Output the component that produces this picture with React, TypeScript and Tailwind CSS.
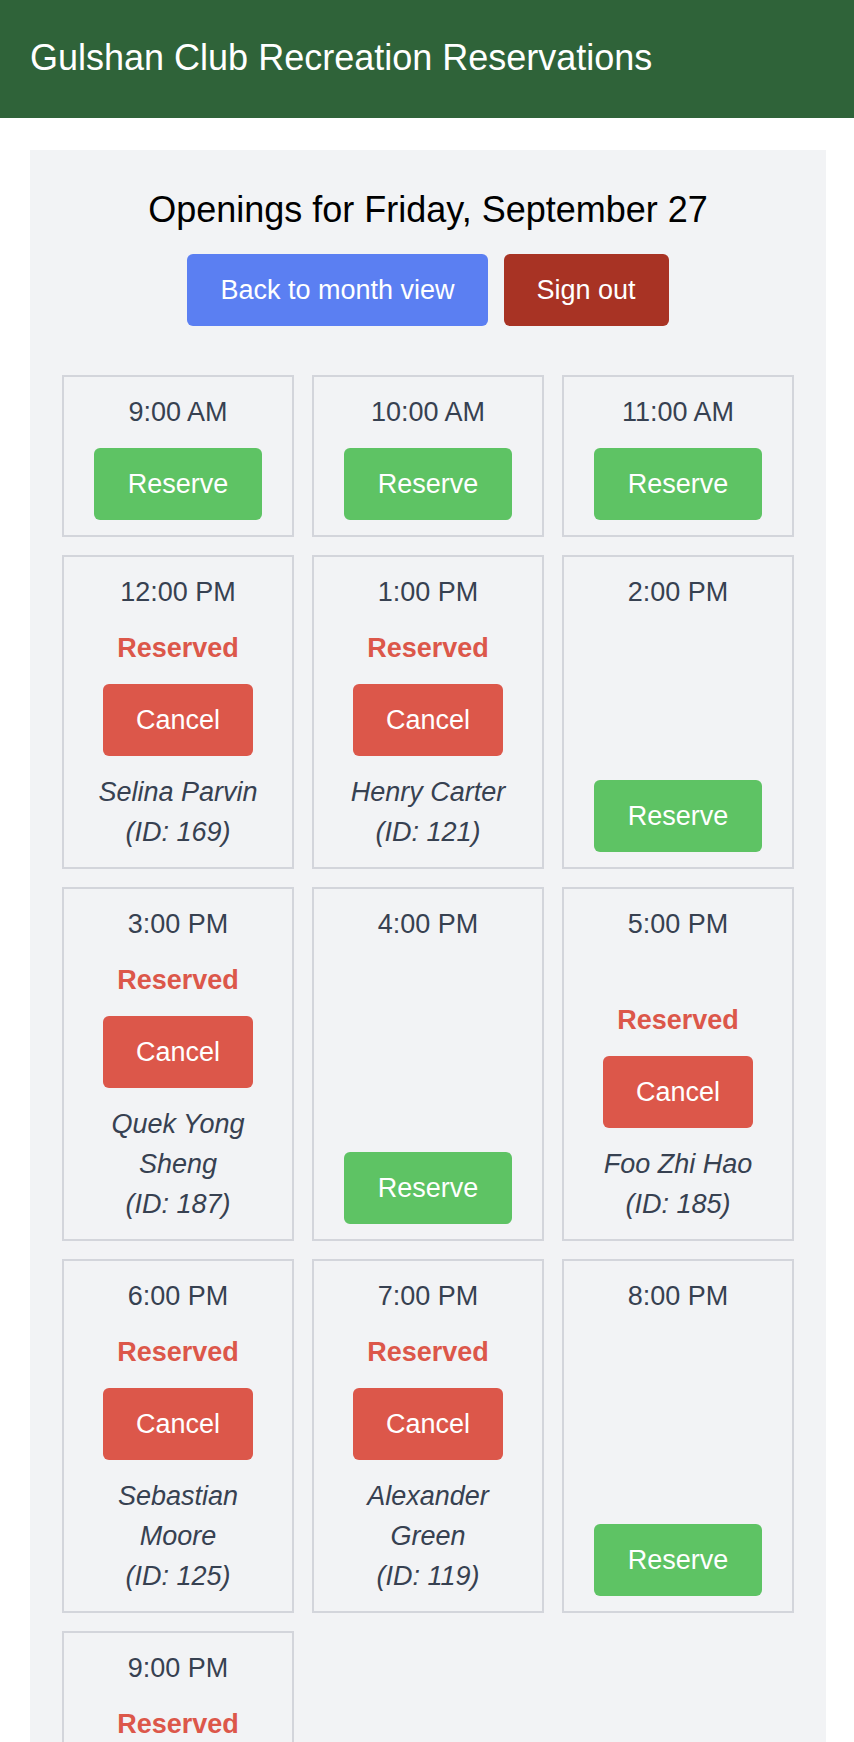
import React from 'react';

type Slot = {
    time: string;
    name?: string;
    id?: number;
};

const slots: Slot[] = [
    { time: '9:00 AM' },
    { time: '10:00 AM' },
    { time: '11:00 AM' },
    { time: '12:00 PM', name: 'Selina Parvin', id: 169 },
    { time: '1:00 PM', name: 'Henry Carter', id: 121 },
    { time: '2:00 PM' },
    { time: '3:00 PM', name: 'Quek Yong Sheng', id: 187 },
    { time: '4:00 PM' },
    { time: '5:00 PM', name: 'Foo Zhi Hao', id: 185 },
    { time: '6:00 PM', name: 'Sebastian Moore', id: 125 },
    { time: '7:00 PM', name: 'Alexander Green', id: 119 },
    { time: '8:00 PM' },
    { time: '9:00 PM', name: 'Olivia Brown', id: 142 },
];

const SlotCard = ({ slot }: { slot: Slot }) => {
    const reserved = !!slot.name;

    return (
        <div className="flex flex-col justify-between items-center gap-4 border-2 border-[#d3d5db] p-[15px] text-center">
            <div className="leading-[40px] text-[#374151]">{slot.time}</div>

            {reserved ? (
                <div className="flex flex-col items-center gap-4 w-full">
                    <div className="leading-[40px] font-bold text-[#dc574a]">Reserved</div>
                    <button className="bg-[#dc574a] text-white leading-[40px] px-[33px] py-4 rounded-[6px]">
                        Cancel
                    </button>
                    <p className="italic leading-[40px] text-[#374151]">
                        {slot.name}
                        <br />
                        (ID: {slot.id})
                    </p>
                </div>
            ) : (
                <button className="bg-[#5ec364] text-white leading-[40px] px-[34px] py-4 rounded-[6px]">
                    Reserve
                </button>
            )}
        </div>
    );
};

export default function App() {
    return (
        <div className="min-h-screen bg-white font-['Liberation_Sans',Arial,sans-serif] text-[27px]">
            <header className="h-[118px] bg-[#2f6339] pt-[31px] px-[30px]">
                <h1 className="text-white text-[36px] leading-[54px]">
                    Gulshan Club Recreation Reservations
                </h1>
            </header>

            <main className="pl-[30px] pr-[28px] pt-[32px]">
                <div className="bg-[#f2f3f5] pt-[33px] px-[32px] pb-8">
                    <h2 className="text-center text-black text-[36px] leading-[54px]">
                        Openings for Friday, September 27
                    </h2>

                    <div className="flex justify-center gap-4 mt-[17px]">
                        <button className="bg-[#5b7ff2] text-white leading-[40px] px-[33px] py-4 rounded-[6px]">
                            Back to month view
                        </button>
                        <button className="bg-[#a83324] text-white leading-[40px] px-[33px] py-4 rounded-[6px]">
                            Sign out
                        </button>
                    </div>

                    <div className="grid grid-cols-3 gap-[18px] mt-[49px]">
                        {slots.map((slot) => (
                            <SlotCard key={slot.time} slot={slot} />
                        ))}
                    </div>
                </div>
            </main>
        </div>
    );
}
